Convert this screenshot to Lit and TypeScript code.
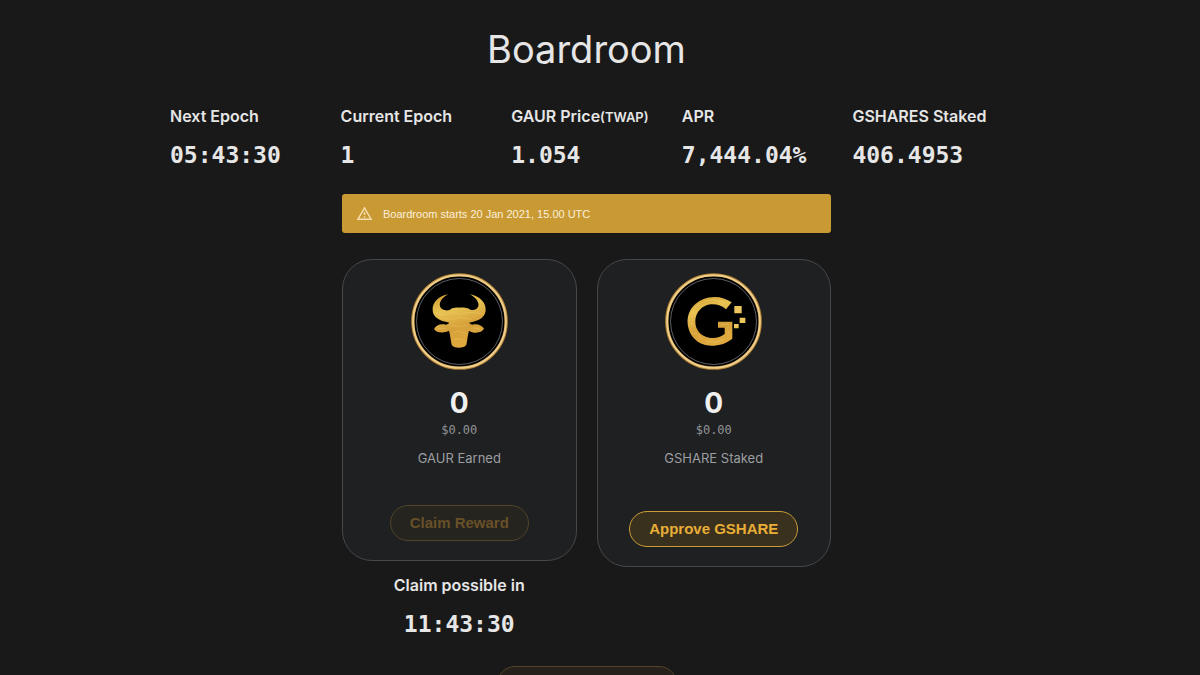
import { LitElement, html, css, svg, nothing } from "lit";
import { customElement, property } from "lit/decorators.js";

const bull = svg`
  <path fill="url(#gold)" d="M144 89 C118 94 96 112 98 137 C99 157 117 169 148 174 C145 177 142 179 137 180
    C122 176 108 181 102 193 C109 203 121 205 132 203 C138 202 143 200 147 198
    C151 211 152 227 155 240 C159 252 194 252 199 240 C202 227 203 211 207 198
    C213 202 221 204 228 204 C239 203 247 200 252 192 C245 181 231 176 217 180
    C213 179 210 177 207 174 C236 169 255 158 257 138 C259 112 236 94 210 89
    C230 101 238 114 235 125 C232 134 222 138 211 135 C203 129 187 128 177 129
    C166 128 156 130 149 136 C136 140 123 135 120 125 C117 114 124 101 144 89Z"/>
  <g fill="none" stroke="#fbe48c" stroke-width="2" opacity=".35">
    <path d="M110 146l22 5 21-7 28 5 30-6 33 4M126 160l30 4 24-5 34 5M112 190l24 3M155 182l22 4 24-5M158 203l18-3 20 5M219 190l23 2M161 225l14-3 15 4"/>
  </g>`;

const letterMark = svg`
  <path fill="url(#gold)" d="M231 113 C208 96 174 91 145 104 C111 118 96 148 99 178
    C103 216 132 243 170 243 C194 243 213 237 233 222 L233 171 L190 171 L190 189
    L210 189 L210 208 C196 219 180 222 164 219 C139 216 121 195 122 170
    C122 143 143 121 169 119 C187 118 202 123 214 134Z"/>
  <path fill="#edc65c" d="M239 124h22v22h-22zM255 159h17v16h-17zM238 178h14v13h-14z"/>
  <g fill="none" stroke="#fbe48c" stroke-width="2" opacity=".35">
    <path d="M112 143l9-15 17-13M151 109l26-4 30 8M105 176l12 4M112 203l17 6 14 15M154 229l29 4 24-9M198 180l25-2M218 197l8 14"/>
  </g>`;

@customElement("token-badge")
export class TokenBadge extends LitElement {
  @property() kind = "bull";
  static styles = css`
    :host { display: block; line-height: 0; }
    svg { width: 97px; height: 97px; }
  `;
  render() {
    return html`<svg viewBox="0 0 291 291" aria-hidden="true">
      <defs>
        <linearGradient id="gold" x1="0" y1="0" x2=".3" y2="1">
          <stop offset="0" stop-color="#cf9c2c"/><stop offset=".35" stop-color="#e8c252"/>
          <stop offset=".7" stop-color="#d6a03a"/><stop offset="1" stop-color="#dfa93e"/>
        </linearGradient>
        <linearGradient id="rim" x1="0" y1="0" x2="1" y2="1">
          <stop offset="0" stop-color="#b98530"/><stop offset=".5" stop-color="#a8772e"/>
          <stop offset="1" stop-color="#bd8634"/>
        </linearGradient>
      </defs>
      <circle cx="145.5" cy="145.5" r="140" fill="#000" stroke="url(#rim)" stroke-width="10"/>
      <circle cx="145.5" cy="145.5" r="139" fill="none" stroke="#edd08e" stroke-width="6"/>
      <circle cx="145.5" cy="145.5" r="129" fill="none" stroke="#8b8c94" stroke-width="2"/>
      <g transform=${this.kind === "bull" ? "translate(-33 -25)" : "translate(-31 -25)"}>
        ${this.kind === "bull" ? bull : letterMark}
      </g>
    </svg>`;
  }
}

@customElement("stat-item")
export class StatItem extends LitElement {
  @property() label = "";
  @property() note = "";
  @property() value = "";
  static styles = css`
    :host { display: block; white-space: nowrap; color: #e6e6e6; }
    .label {
      margin: 0; font: 600 16px/24px Inter, "DM Sans", sans-serif;
    }
    .note { font-size: 13px; line-height: 1; }
    .value {
      margin: 12px 0 0; font: 700 23px/30px "DejaVu Sans Mono", monospace;
    }
  `;
  render() {
    return html`<p class="label">${this.label}${this.note ? html`<span class="note">${this.note}</span>` : nothing}</p>
      <p class="value">${this.value}</p>`;
  }
}

@customElement("token-card")
export class TokenCard extends LitElement {
  @property() kind = "bull";
  @property() label = "";
  @property() action = "";
  @property({ type: Boolean }) locked = false;
  static styles = css`
    :host {
      display: flex; flex-direction: column; align-items: center;
      padding: 13px 16px 19px; border: 1px solid #45474a; border-radius: 30px;
      background: #1e2022; color: #a5a6a8;
    }
    .amount { margin-top: 14px; font: 700 28px/38px Inter, sans-serif; color: #f0f0f0; }
    .usd { font: 400 12px/16px "DejaVu Sans Mono", monospace; color: #929395; }
    .label { margin-top: 10px; font: 400 13px/20px Inter, sans-serif; color: #9d9ea0; }
    button {
      height: 36px; margin-top: 43px; padding: 0 19px; border: 1px solid #c99c38;
      border-radius: 18px; background: #3a301e; color: #e8ae36;
      font: 700 15px/20px "Liberation Sans", Arial, sans-serif; cursor: pointer;
    }
    button:disabled {
      margin-top: 37px; border-color: #54452a; background: #26241f; color: #685028; cursor: default;
    }
  `;
  render() {
    return html`<token-badge kind=${this.kind}></token-badge>
      <div class="amount">0</div>
      <div class="usd">$0.00</div>
      <div class="label">${this.label}</div>
      <button type="button" ?disabled=${this.locked}>${this.action}</button>`;
  }
}

@customElement("app-root")
export class AppRoot extends LitElement {
  static styles = css`
    :host {
      display: block; box-sizing: border-box; height: 100vh; overflow: hidden;
      padding: 24px 27px 0 0; background: #191919;
    }
    h1 {
      margin: 0; text-align: center; color: #e6e6e6;
      font: 400 38px/50px Inter, "DM Sans", sans-serif;
    }
    .stats {
      display: grid; grid-template-columns: repeat(5, minmax(0, 1fr)); gap: 20px;
      max-width: 833px; margin: 30px auto 0;
    }
    .board { max-width: 489px; margin: 24px auto 0; }
    .notice {
      display: flex; align-items: center; gap: 10px; height: 39px; padding: 0 14px;
      border-radius: 3px; background: #c99934; color: #fbf0dc;
      font: 400 11px/18px "Liberation Sans", Arial, sans-serif;
    }
    .notice svg { width: 17px; height: 17px; }
    .cards {
      display: grid; grid-template-columns: 1fr 1fr; gap: 20px;
      align-items: start; margin-top: 26px;
    }
    .countdown { margin-top: 12px; text-align: center; }
    .footer { display: flex; justify-content: center; margin-top: 27px; }
    .footer button {
      width: 180px; height: 36px; border: 1px solid #54452a; border-radius: 18px;
      background: #26211a;
    }
  `;
  render() {
    return html`
      <h1>Boardroom</h1>
      <section class="stats">
        <stat-item label="Next Epoch" value="05:43:30"></stat-item>
        <stat-item label="Current Epoch" value="1"></stat-item>
        <stat-item label="GAUR Price" note="(TWAP)" value="1.054"></stat-item>
        <stat-item label="APR" value="7,444.04%"></stat-item>
        <stat-item label="GSHARES Staked" value="406.4953"></stat-item>
      </section>
      <main class="board">
        <div class="notice" role="alert">
          <svg viewBox="0 0 24 24" fill="#f8dfad" aria-hidden="true">
            <path d="M12 5.99L19.53 19H4.47L12 5.99M12 2L1 21h22L12 2zm1 14h-2v2h2v-2zm0-6h-2v4h2v-4z"/>
          </svg>
          <span>Boardroom starts 20 Jan 2021, 15.00 UTC</span>
        </div>
        <div class="cards">
          <div>
            <token-card kind="bull" label="GAUR Earned" action="Claim Reward" locked></token-card>
            <stat-item class="countdown" label="Claim possible in" value="11:43:30"></stat-item>
          </div>
          <token-card kind="letter" label="GSHARE Staked" action="Approve GSHARE"></token-card>
        </div>
        <div class="footer"><button type="button" disabled></button></div>
      </main>`;
  }
}
